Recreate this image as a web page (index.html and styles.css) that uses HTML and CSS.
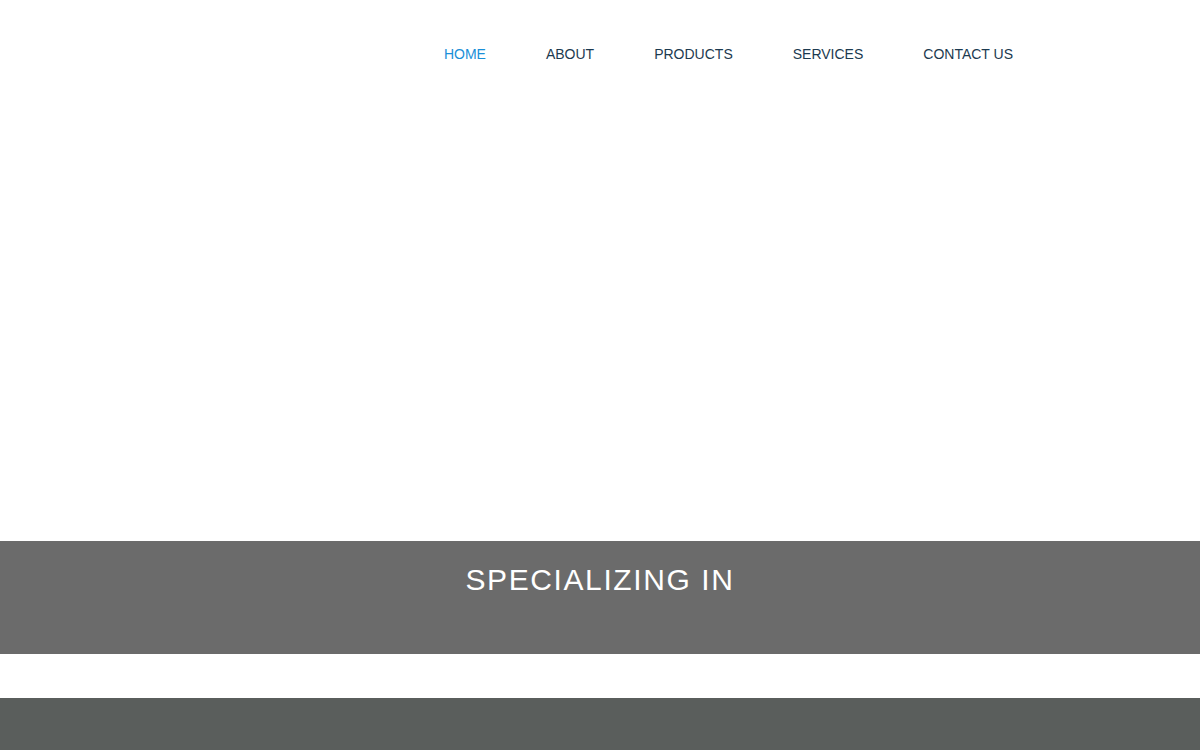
FILE: index.html
```html
<!DOCTYPE html>
<html>
<head>
<meta charset="utf-8">
<link rel="stylesheet" href="styles.css">
</head>
<body>
<header class="header">
  <nav class="nav">
    <a class="nav-link active" href="#">HOME</a>
    <a class="nav-link" href="#">ABOUT</a>
    <a class="nav-link" href="#">PRODUCTS</a>
    <a class="nav-link" href="#">SERVICES</a>
    <a class="nav-link" href="#">CONTACT US</a>
  </nav>
</header>
<section class="hero"></section>
<section class="special">
  <h2 class="special-title">SPECIALIZING IN</h2>
</section>
<div class="spacer"></div>
<footer class="footer"></footer>
</body>
</html>
```
FILE: styles.css
```css
html, body {
  margin: 0;
  padding: 0;
  background: #ffffff;
  font-family: "Liberation Sans", Arial, sans-serif;
}
.header {
  height: 108px;
  display: flex;
  justify-content: flex-end;
  padding-right: 157px;
  box-sizing: border-box;
}
.nav {
  display: flex;
  align-items: flex-start;
  padding-top: 45px;
}
.nav-link {
  font-size: 14px;
  line-height: 18px;
  color: #1c3a50;
  text-decoration: none;
  padding: 0 30px;
}
.nav-link:first-child {
  padding-left: 31px;
}
.nav-link.active {
  color: #1a8fd8;
}
.hero {
  height: 433px;
}
.special {
  height: 113px;
  background: #6b6b6b;
  display: flex;
  justify-content: center;
  box-sizing: border-box;
  padding-top: 22px;
}
.special-title {
  margin: 0;
  font-weight: normal;
  font-size: 30px;
  line-height: 34px;
  letter-spacing: 1.6px;
  color: #ffffff;
}
.spacer {
  height: 44px;
}
.footer {
  height: 52px;
  background: #5a5e5c;
}
```
